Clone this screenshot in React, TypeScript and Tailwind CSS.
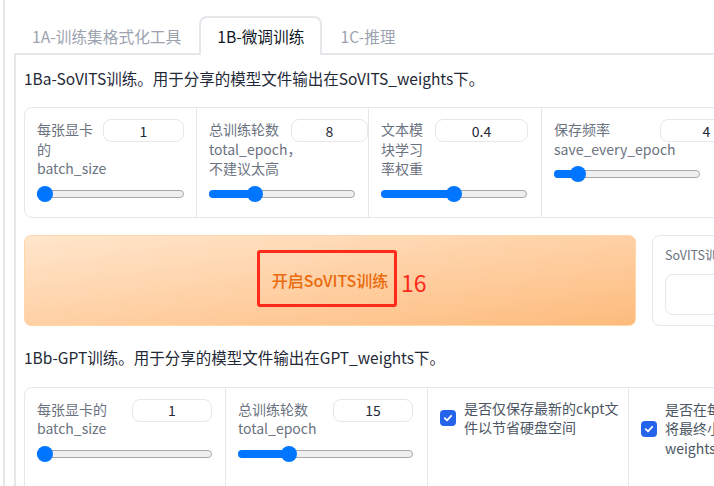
import React from "react";

function Slider({ wCls, pos }: { wCls: string; pos: number }) {
  return (
    <div className={`relative h-[16px] ${wCls}`}>
      <div className="absolute left-0 right-0 top-[4px] h-[8px] rounded-full border border-[#a8a8a8] bg-[#efefef]" />
      <div
        className="absolute left-0 top-[4px] h-[8px] rounded-l-full bg-[#0075ff]"
        style={{ width: pos }}
      />
      <div
        className="absolute top-0 h-[16px] w-[16px] rounded-full bg-[#0075ff]"
        style={{ left: pos - 8 }}
      />
    </div>
  );
}

function NumBox({ value, wCls }: { value: string; wCls: string }) {
  return (
    <div
      className={`flex h-[23px] shrink-0 items-center justify-center rounded-lg border border-[#e5e7eb] text-[14px] leading-[20px] text-[#1f2937] ${wCls}`}
    >
      {value}
    </div>
  );
}

function SliderCol({
  colCls,
  lines,
  labelCls,
  inputCls,
  value,
  trackCls,
  pos,
}: {
  colCls: string;
  lines: string[];
  labelCls: string;
  inputCls: string;
  value: string;
  trackCls: string;
  pos: number;
}) {
  return (
    <div className={`flex shrink-0 flex-col overflow-hidden px-3 pb-[15px] pt-[11px] ${colCls}`}>
      <div className="flex items-start">
        <div
          className={`shrink-0 whitespace-nowrap pt-[1px] text-[14px] leading-[19.5px] text-[#6b7280] ${labelCls}`}
        >
          {lines.map((l, i) => (
            <div key={i}>{l}</div>
          ))}
        </div>
        <NumBox value={value} wCls={inputCls} />
      </div>
      <div className="mt-[7px]">
        <Slider wCls={trackCls} pos={pos} />
      </div>
    </div>
  );
}

function Check() {
  return (
    <div className="flex h-[16px] w-[16px] shrink-0 items-center justify-center rounded-[4px] bg-[#2563eb]">
      <svg width="10" height="10" viewBox="0 0 10 10" fill="none">
        <path d="M1.8 5.2 L4 7.3 L8.2 2.8" stroke="white" strokeWidth="1.8" strokeLinecap="round" strokeLinejoin="round" />
      </svg>
    </div>
  );
}

export default function App() {
  return (
    <div className="h-[486px] w-[714px] overflow-hidden bg-white pl-[3px] font-['Noto_Sans_CJK_SC','Noto_Sans',sans-serif]">
      <div className="h-full border-l-2 border-[#e5e7eb] pl-[9px] pt-[16px]">
        {/* Tabs */}
        <div className="flex h-[39px] items-end border-b-2 border-[#e5e7eb] text-[15.7px] leading-[24px]">
          <div className="-mb-[2px] flex h-[39px] items-center whitespace-nowrap border-2 border-b-0 border-transparent px-4 text-[#9ca3af]">
            1A-训练集格式化工具
          </div>
          <div className="-mb-[2px] flex h-[39px] items-center whitespace-nowrap rounded-t-[8px] border-2 border-b-0 border-[#e5e7eb] bg-white px-4 text-[#111827]">
            1B-微调训练
          </div>
          <div className="-mb-[2px] flex h-[39px] items-center whitespace-nowrap border-2 border-b-0 border-transparent px-4 text-[#9ca3af]">
            1C-推理
          </div>
        </div>

        {/* Panel */}
        <div className="h-full border-l-2 border-[#e5e7eb] pl-[8px] pt-[11px]">
          <div className="whitespace-nowrap text-[15.5px] leading-[24px] text-[#1f2937]">
            1Ba-SoVITS训练。用于分享的模型文件输出在SoVITS_weights下。
          </div>

          <div className="mt-[17px] flex w-[760px] rounded-lg border border-[#e5e7eb]">
            <SliderCol
              colCls="w-[171px]"
              lines={["每张显卡", "的", "batch_size"]}
              labelCls="w-[66px]"
              inputCls="w-[81px]"
              value="1"
              trackCls="w-[147px]"
              pos={8}
            />
            <SliderCol
              colCls="w-[172px] border-l border-[#e5e7eb]"
              lines={["总训练轮数", "total_epoch，", "不建议太高"]}
              labelCls="w-[82px]"
              inputCls="w-[77px]"
              value="8"
              trackCls="w-[146px]"
              pos={46}
            />
            <SliderCol
              colCls="w-[173px] border-l border-[#e5e7eb]"
              lines={["文本模", "块学习", "率权重"]}
              labelCls="w-[54px]"
              inputCls="w-[93px]"
              value="0.4"
              trackCls="w-[146px]"
              pos={73}
            />
            <SliderCol
              colCls="w-[200px] border-l border-[#e5e7eb]"
              lines={["保存频率", "save_every_epoch"]}
              labelCls="w-[106px]"
              inputCls="w-[93px]"
              value="4"
              trackCls="w-[146px]"
              pos={24}
            />
          </div>

          {/* Button row */}
          <div className="mt-[17px] flex gap-4">
            <div className="relative flex h-[91px] w-[612px] shrink-0 items-center justify-center rounded-[7px] border border-[#fed7aa] bg-linear-to-br from-[#ffe6cc] to-[#fdbb7c] text-[16px] font-medium leading-[24px] text-[#ea6a0c]">
              开启SoVITS训练
              <div className="absolute left-[232px] top-[14px] h-[57px] w-[140px] rounded-[3px] border-[3px] border-[#ff2a1a]" />
              <div className="absolute left-[376px] top-[31px] text-[23px] leading-[30px] font-normal text-[#ff2a1a]">
                16
              </div>
            </div>
            <div className="h-[91px] w-[300px] shrink-0 rounded-lg border border-[#e5e7eb] px-3 pt-[10px]">
              <div className="text-[12.5px] leading-[18px] text-[#6b7280]">SoVITS训练进度</div>
              <div className="mt-[10px] h-[41px] rounded-lg border border-[#e5e7eb]" />
            </div>
          </div>

          <div className="mt-[19px] whitespace-nowrap text-[15.5px] leading-[24px] text-[#1f2937]">
            1Bb-GPT训练。用于分享的模型文件输出在GPT_weights下。
          </div>

          <div className="mt-[18px] flex h-[200px] w-[820px] rounded-lg border border-[#e5e7eb]">
            <SliderCol
              colCls="w-[200px]"
              lines={["每张显卡的", "batch_size"]}
              labelCls="w-[95px]"
              inputCls="w-[80px]"
              value="1"
              trackCls="w-[175px]"
              pos={8}
            />
            <SliderCol
              colCls="w-[202px] border-l border-[#e5e7eb]"
              lines={["总训练轮数", "total_epoch"]}
              labelCls="w-[95px]"
              inputCls="w-[80px]"
              value="15"
              trackCls="w-[175px]"
              pos={51}
            />
            <div className="w-[201px] shrink-0 border-l border-[#e5e7eb] px-3 pt-[11px]">
              <div className="flex items-center gap-2">
                <Check />
                <div className="whitespace-nowrap text-[14px] leading-[19.5px] text-[#4b5563]">
                  <div>是否仅保存最新的ckpt文</div>
                  <div>件以节省硬盘空间</div>
                </div>
              </div>
            </div>
            <div className="w-[200px] shrink-0 border-l border-[#e5e7eb] px-3 pt-[12px]">
              <div className="flex items-center gap-2">
                <Check />
                <div className="whitespace-nowrap text-[14px] leading-[19.5px] text-[#4b5563]">
                  <div>是否在每次保存时间点</div>
                  <div>将最终小模型保存至</div>
                  <div>weights文件夹</div>
                </div>
              </div>
            </div>
          </div>
        </div>
      </div>
    </div>
  );
}
